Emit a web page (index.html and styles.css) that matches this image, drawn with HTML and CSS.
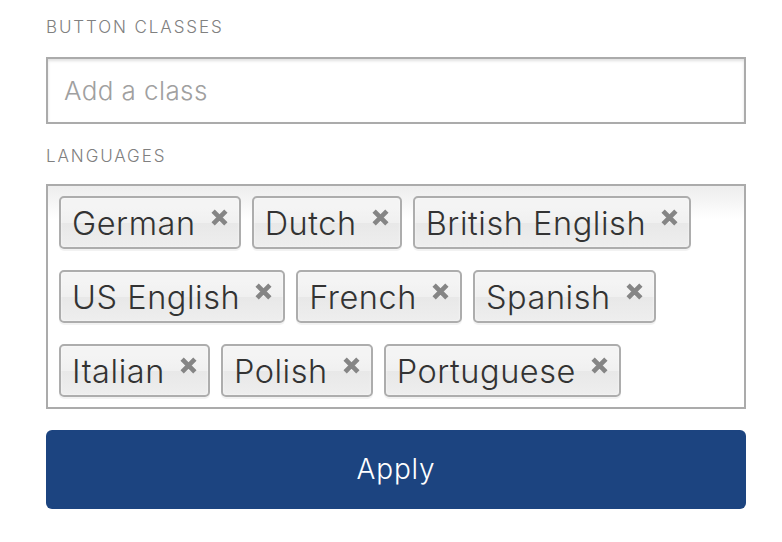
FILE: index.html
```html
<!DOCTYPE html>
<html lang="en">
<head>
<meta charset="utf-8">
<title>Button settings</title>
<link rel="stylesheet" href="styles.css">
</head>
<body>
<form class="panel">
  <label class="field-label" for="classes">Button classes</label>
  <input class="text-input" id="classes" type="text" placeholder="Add a class">

  <div class="field-label">Languages</div>
  <ul class="choices">
    <li class="chip"><span>German</span><svg class="chip-x" viewBox="0 0 16 16"><path d="M2 2L14 14M14 2L2 14"/></svg></li>
    <li class="chip"><span>Dutch</span><svg class="chip-x" viewBox="0 0 16 16"><path d="M2 2L14 14M14 2L2 14"/></svg></li>
    <li class="chip"><span>British English</span><svg class="chip-x" viewBox="0 0 16 16"><path d="M2 2L14 14M14 2L2 14"/></svg></li>
    <li class="chip"><span>US English</span><svg class="chip-x" viewBox="0 0 16 16"><path d="M2 2L14 14M14 2L2 14"/></svg></li>
    <li class="chip"><span>French</span><svg class="chip-x" viewBox="0 0 16 16"><path d="M2 2L14 14M14 2L2 14"/></svg></li>
    <li class="chip"><span>Spanish</span><svg class="chip-x" viewBox="0 0 16 16"><path d="M2 2L14 14M14 2L2 14"/></svg></li>
    <li class="chip"><span>Italian</span><svg class="chip-x" viewBox="0 0 16 16"><path d="M2 2L14 14M14 2L2 14"/></svg></li>
    <li class="chip"><span>Polish</span><svg class="chip-x" viewBox="0 0 16 16"><path d="M2 2L14 14M14 2L2 14"/></svg></li>
    <li class="chip"><span>Portuguese</span><svg class="chip-x" viewBox="0 0 16 16"><path d="M2 2L14 14M14 2L2 14"/></svg></li>
  </ul>

  <button class="apply" type="button">Apply</button>
</form>
</body>
</html>
```

FILE: styles.css
```css
* { box-sizing: border-box; }

html, body {
  margin: 0;
  padding: 0;
  background: #fff;
}

body {
  font-family: Inter, "DejaVu Sans", sans-serif;
  font-weight: 300;
}

.panel {
  width: 700px;
  margin-left: 46px;
  padding-top: 17px;
}

.field-label {
  display: block;
  font-size: 17px;
  line-height: 21px;
  letter-spacing: 1.9px;
  text-transform: uppercase;
  color: #808080;
}

.text-input {
  display: block;
  width: 100%;
  height: 67px;
  margin: 19px 0 22px;
  padding: 0 16px;
  border: 2px solid #ababab;
  border-radius: 0;
  box-shadow: inset 0 2px 3px rgba(0, 0, 0, 0.12);
  font-family: inherit;
  font-weight: 300;
  font-size: 26px;
  letter-spacing: 0.4px;
  color: #333;
  background: #fff;
  outline: none;
}

.text-input::placeholder {
  color: #a0a0a0;
}

.choices {
  list-style: none;
  margin: 17px 0 0;
  padding: 10px 11px;
  border: 2px solid #ababab;
  background: linear-gradient(to bottom, #eee 1%, #fff 15%);
  display: flex;
  flex-wrap: wrap;
  column-gap: 11px;
  row-gap: 21px;
}

.chip {
  display: flex;
  align-items: flex-start;
  height: 53px;
  padding: 6px 11px 0 11px;
  border: 2px solid #adadad;
  border-radius: 5px;
  background: linear-gradient(to bottom, #f4f4f4 20%, #f0f0f0 50%, #e8e8e8 52%, #eee 100%);
  box-shadow: inset 0 0 2px #fff, 0 2px 0 rgba(0, 0, 0, 0.05);
  font-size: 32.5px;
  line-height: 40px;
  letter-spacing: 0.55px;
  color: #333;
}

.chip-x {
  width: 17px;
  height: 17px;
  margin: 5px 0 0 15px;
  flex: none;
  fill: none;
  stroke: #858585;
  stroke-width: 4.4;
}

.apply {
  display: block;
  width: 100%;
  height: 79px;
  margin-top: 21px;
  border: 0;
  border-radius: 6px;
  background: #1c4480;
  color: #fff;
  font-family: inherit;
  font-weight: 300;
  font-size: 28px;
  letter-spacing: 0.8px;
  line-height: 79px;
  padding: 0;
  cursor: pointer;
}
```
